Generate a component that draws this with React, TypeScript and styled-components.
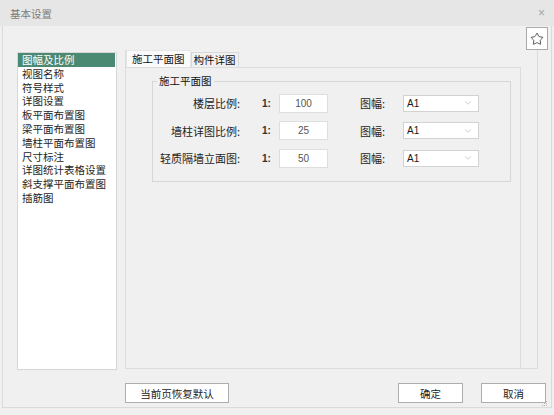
import React from "react";
import styled, { createGlobalStyle } from "styled-components";
import { Star, ChevronDown } from "lucide-react";

const GlobalStyle = createGlobalStyle`
  html, body { margin: 0; padding: 0; background: #f0f0f0; }
  body { font-family: "Noto Sans CJK SC", "Liberation Sans", sans-serif; }
  * { box-sizing: border-box; }
`;

const Window = styled.div`
  width: 554px;
  height: 415px;
  display: flex;
  flex-direction: column;
  background: #f0f0f0;
  overflow: hidden;
`;

const TitleBar = styled.div`
  height: 26px;
  flex: none;
  background: #e6e6e6;
  display: flex;
  align-items: center;
  justify-content: space-between;
  padding: 0 9px 0 10px;
`;

const Title = styled.span`
  font-size: 10.5px;
  color: #7c7c7c;
`;

const Close = styled.span`
  font-size: 12px;
  color: #a4a4a4;
  font-family: "Liberation Sans", sans-serif;
`;

const Body = styled.div`
  position: relative;
  flex: none;
  height: 382px;
  margin: 0 2px;
  border: 1px solid #dadada;
  border-top: none;
  display: flex;
  flex-direction: column;
`;

const StarRow = styled.div`
  height: 24px;
  flex: none;
  display: flex;
  justify-content: flex-end;
  padding: 1px 3px 0 0;
`;

const StarButton = styled.div`
  width: 22px;
  height: 23px;
  background: #fff;
  border: 1px solid #a9a9a9;
  display: flex;
  align-items: center;
  justify-content: center;
  color: #333;
`;

const MainRow = styled.div`
  height: 319px;
  flex: none;
  display: flex;
  align-items: flex-start;
  padding-left: 14px;
  gap: 8px;
`;

const List = styled.div`
  width: 100px;
  height: 318px;
  margin-top: 2px;
  background: #fff;
  border: 1px solid #d6d6d6;
  padding-right: 1px;
`;

const ListItem = styled.div<{ $active?: boolean }>`
  height: 13.8px;
  line-height: 13.8px;
  padding-left: 4px;
  font-size: 10.5px;
  white-space: nowrap;
  color: ${(p) => (p.$active ? "#ffffff" : "#1e1e1e")};
  background: ${(p) => (p.$active ? "#4b8a72" : "transparent")};
`;

const RightFrame = styled.div`
  width: 413px;
  height: 319px;
  border: 1px solid #dcdcdc;
  border-top: none;
  display: flex;
  flex-direction: column;
`;

const TabBar = styled.div`
  height: 17px;
  flex: none;
  display: flex;
  align-items: flex-end;
`;

const Tab = styled.div<{ $active?: boolean }>`
  height: ${(p) => (p.$active ? 17 : 15)}px;
  line-height: ${(p) => (p.$active ? 16 : 14)}px;
  padding: 0 ${(p) => (p.$active ? 5 : 2)}px;
  font-size: 10.5px;
  color: #111;
  background: ${(p) => (p.$active ? "#fafafa" : "#f0f0f0")};
  border: 1px solid ${(p) => (p.$active ? "#e6e6e6" : "#d8d8d8")};
  border-bottom: none;
  white-space: nowrap;
`;

const Pane = styled.div`
  flex: 1;
  width: 395px;
  border-top: 1px solid #dcdcdc;
  border-right: 1px solid #dcdcdc;
  padding: 6px 0 0 26px;
`;

const Group = styled.fieldset`
  margin: 0;
  width: 359px;
  min-inline-size: 0;
  border: 1px solid #d6d6d6;
  padding: 5px 0 13px 0;
  display: flex;
  flex-direction: column;
  gap: 7.5px;
`;

const Legend = styled.legend`
  margin-left: 4px;
  padding: 0 2px;
  font-size: 10.5px;
  line-height: 14px;
  color: #111;
`;

const Row = styled.div`
  height: 20px;
  display: flex;
  align-items: center;
`;

const Label = styled.span`
  width: 87px;
  text-align: right;
  font-size: 11px;
  color: #1e1e1e;
  white-space: nowrap;
`;

const Ratio = styled.span`
  margin-left: 22px;
  width: 17px;
  font-family: "Liberation Sans", sans-serif;
  font-size: 10px;
  font-weight: bold;
  color: #333;
`;

const NumInput = styled.input`
  width: 49px;
  height: 19px;
  background: #fff;
  border: 1px solid #dedede;
  outline: none;
  padding: 0;
  text-align: center;
  font-family: "Liberation Sans", sans-serif;
  font-size: 10px;
  color: #555;
`;

const SizeLabel = styled.span`
  margin-left: 32px;
  width: 43px;
  font-size: 11px;
  color: #1e1e1e;
`;

const Select = styled.div`
  width: 76px;
  height: 17px;
  background: #fff;
  border: 1px solid #d2d2d2;
  display: flex;
  align-items: center;
  justify-content: space-between;
  padding: 0 5px 0 3px;
  font-family: "Liberation Sans", sans-serif;
  font-size: 10px;
  color: #1a1a1a;
  svg { color: #a0a0a0; }
`;

const ButtonRow = styled.div`
  margin-top: 14px;
  height: 20px;
  flex: none;
  display: flex;
  padding: 0 5px 0 122px;
  gap: 18px;
`;

const Spacer = styled.div`
  flex: 1;
`;

const Button = styled.div<{ $w: number }>`
  width: ${(p) => p.$w}px;
  height: 20px;
  background: #fff;
  border: 1px solid #adadad;
  display: flex;
  align-items: center;
  justify-content: center;
  font-size: 10.5px;
  color: #222;
`;

const Grip = styled.svg`
  position: absolute;
  right: 3px;
  bottom: 0px;
`;

const items = [
  "图幅及比例",
  "视图名称",
  "符号样式",
  "详图设置",
  "板平面布置图",
  "梁平面布置图",
  "墙柱平面布置图",
  "尺寸标注",
  "详图统计表格设置",
  "斜支撑平面布置图",
  "插筋图",
];

const rows = [
  { label: "楼层比例:", value: "100" },
  { label: "墙柱详图比例:", value: "25" },
  { label: "轻质隔墙立面图:", value: "50" },
];

export default function App() {
  return (
    <>
      <GlobalStyle />
      <Window>
        <TitleBar>
          <Title>基本设置</Title>
          <Close>×</Close>
        </TitleBar>
        <Body>
          <StarRow>
            <StarButton>
              <Star size={14} strokeWidth={1.4} />
            </StarButton>
          </StarRow>
          <MainRow>
            <List>
              {items.map((t, i) => (
                <ListItem key={t} $active={i === 0}>
                  {t}
                </ListItem>
              ))}
            </List>
            <RightFrame>
              <TabBar>
                <Tab $active>施工平面图</Tab>
                <Tab>构件详图</Tab>
              </TabBar>
              <Pane>
                <Group>
                  <Legend>施工平面图</Legend>
                  {rows.map((r) => (
                    <Row key={r.label}>
                      <Label>{r.label}</Label>
                      <Ratio>1:</Ratio>
                      <NumInput readOnly value={r.value} />
                      <SizeLabel>图幅:</SizeLabel>
                      <Select>
                        <span>A1</span>
                        <ChevronDown size={10} strokeWidth={1.3} />
                      </Select>
                    </Row>
                  ))}
                </Group>
              </Pane>
            </RightFrame>
          </MainRow>
          <ButtonRow>
            <Button $w={104}>当前页恢复默认</Button>
            <Spacer />
            <Button $w={65}>确定</Button>
            <Button $w={65}>取消</Button>
          </ButtonRow>
          <Grip width="7" height="7" viewBox="0 0 7 7">
            <rect x="5" y="1" width="1" height="1" fill="#b5b5b5" />
            <rect x="3" y="3" width="1" height="1" fill="#b5b5b5" />
            <rect x="5" y="3" width="1" height="1" fill="#b5b5b5" />
            <rect x="1" y="5" width="1" height="1" fill="#b5b5b5" />
            <rect x="3" y="5" width="1" height="1" fill="#b5b5b5" />
            <rect x="5" y="5" width="1" height="1" fill="#b5b5b5" />
          </Grip>
        </Body>
      </Window>
    </>
  );
}
